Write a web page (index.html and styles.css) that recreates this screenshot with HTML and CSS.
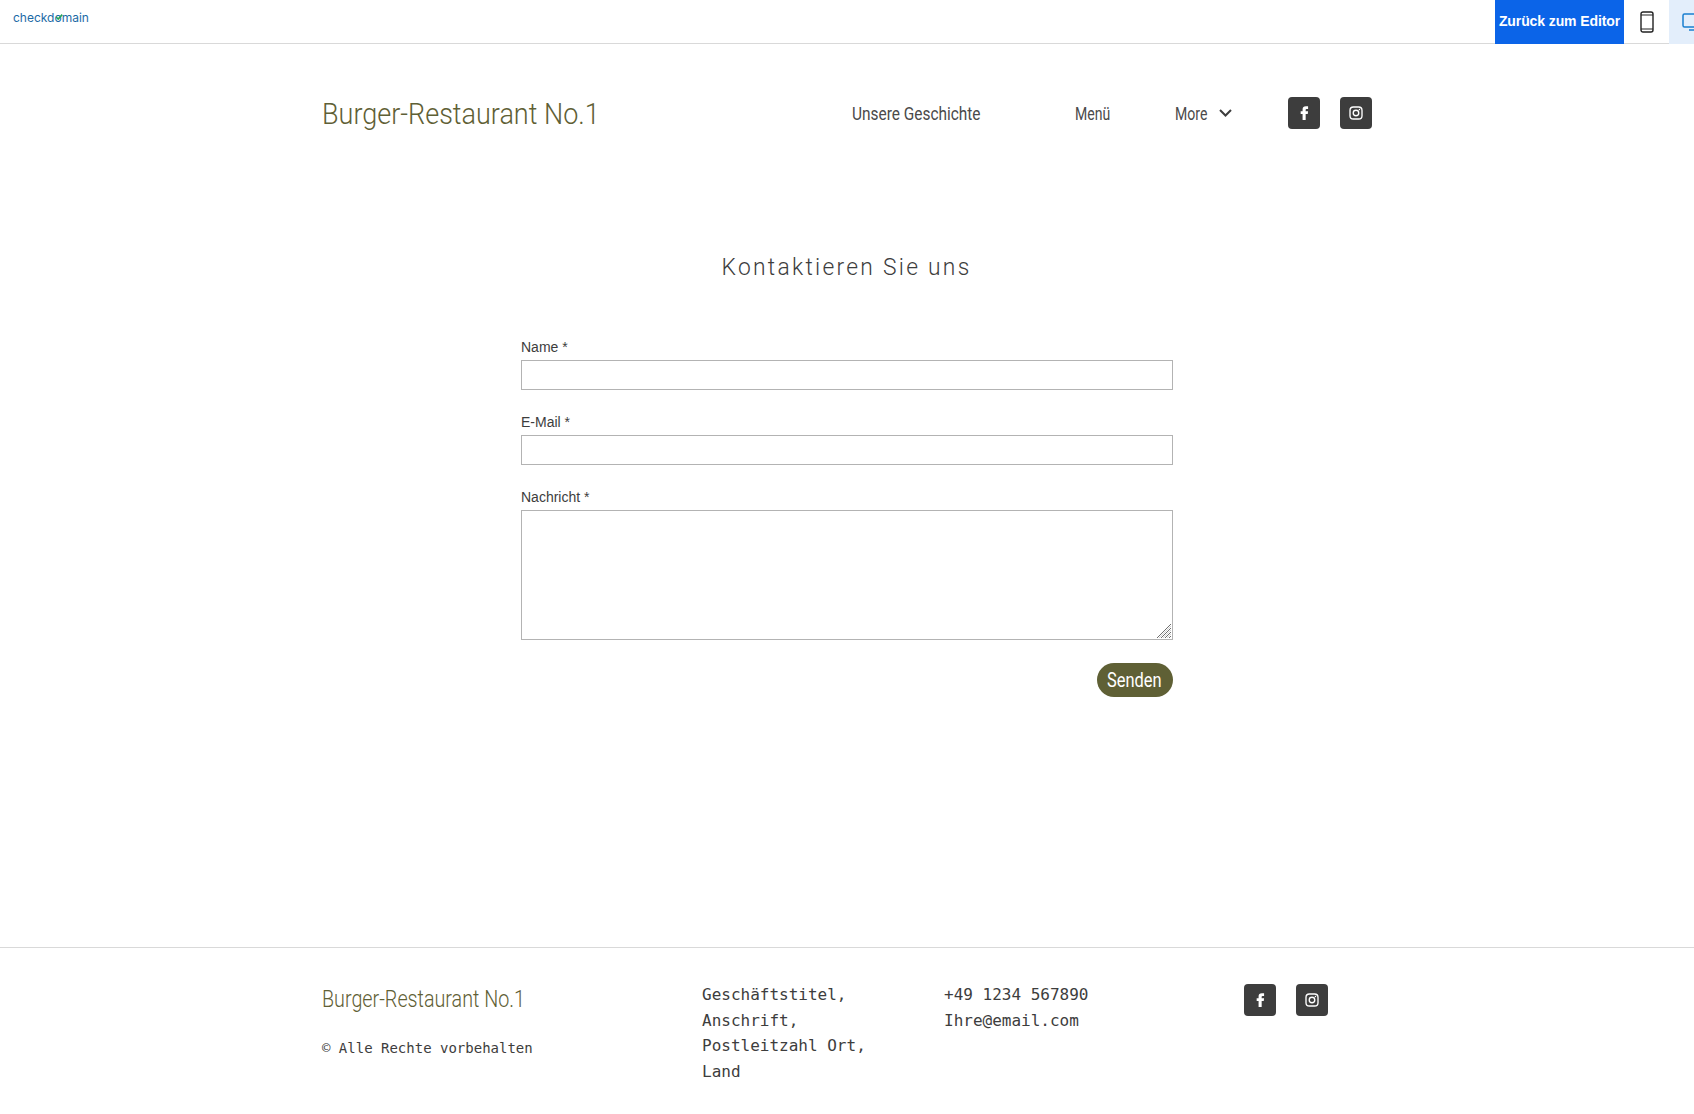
FILE: index.html
```html
<!DOCTYPE html>
<html lang="de">
<head>
    <meta charset="UTF-8">
    <title>Kontakt</title>
    <link rel="stylesheet" href="styles.css">
</head>
<body>
    <div class="topbar">
        <div class="brand">checkd<span class="brand-o">o<svg viewBox="0 0 10 10"><path d="M1.5 5l2.5 2.5L9 2" fill="none" stroke="#25a35a" stroke-width="2"/></svg></span>main</div>
        <a class="back-btn" href="#">Zurück zum Editor</a>
        <div class="device">
            <svg width="14" height="22" viewBox="0 0 14 22"><rect x="1" y="1" width="12" height="20" rx="2" fill="none" stroke="#222" stroke-width="1.4"/><path d="M1 4h12M1 18h12" stroke="#222" stroke-width="1.2"/></svg>
        </div>
        <div class="device device-active">
            <svg width="25" height="18" viewBox="0 0 25 18"><rect x="1" y="1" width="23" height="13" rx="1.5" fill="none" stroke="#1a7fd0" stroke-width="1.5"/><path d="M7 17h11" stroke="#1a7fd0" stroke-width="1.5"/></svg>
        </div>
    </div>

    <header class="site-header">
        <div class="logo"><span>Burger-Restaurant No.1</span></div>
        <nav class="nav">
            <a class="nav-story" href="#"><span>Unsere Geschichte</span></a>
            <a class="nav-menu" href="#"><span>Menü</span></a>
            <a class="nav-more" href="#"><span>More</span>
                <svg width="13" height="8" viewBox="0 0 13 8"><path d="M1 1l5.500 5.500L12 1" fill="none" stroke="#3d3d3d" stroke-width="2"/></svg>
            </a>
            <div class="social">
                <a class="social-btn" href="#"><svg width="20" height="20" viewBox="0 0 24 24"><path d="M14 8c0-.6.3-.9 1-.9h1.900V3.900h-2.600c-2.700 0-4 1.500-4 3.800v2.200H8v3.200h2.300v7.300H14v-7.300h2.500l.4-3.200H14z" fill="#fff"/></svg></a>
                <a class="social-btn" href="#"><svg width="18" height="18" viewBox="0 0 24 24"><rect x="4" y="4" width="16" height="16" rx="4.500" fill="none" stroke="#fff" stroke-width="1.800"/><circle cx="12" cy="12" r="3.700" fill="none" stroke="#fff" stroke-width="1.800"/><circle cx="16.600" cy="7.400" r="1" fill="#fff"/></svg></a>
            </div>
        </nav>
    </header>

    <main class="content">
        <h1 class="title"><span>Kontaktieren Sie uns</span></h1>
        <form class="contact-form">
            <div class="inputBox">
                <label for="name">Name *</label>
                <input id="name" type="text">
            </div>
            <div class="inputBox">
                <label for="email">E-Mail *</label>
                <input id="email" type="text">
            </div>
            <div class="inputBox">
                <label for="msg">Nachricht *</label>
                <textarea id="msg"></textarea>
                <svg class="grip" width="14" height="14" viewBox="0 0 14 14"><path d="M14 0L0 14M14 4L4 14M14 8L8 14M14 12L12 14" stroke="#6e6e6e" stroke-width="1"/><path d="M14 2L2 14M14 6L6 14M14 10L10 14" stroke="#d0d0d0" stroke-width="1"/></svg>
            </div>
            <div class="actions">
                <button class="submit-btn" type="button"><span>Senden</span></button>
            </div>
        </form>
    </main>

    <footer class="site-footer">
        <div class="footer-inner">
            <div class="footer-brand">
                <div class="footer-logo"><span>Burger-Restaurant No.1</span></div>
                <p class="copyright">© Alle Rechte vorbehalten</p>
            </div>
            <div class="footer-address">Geschäftstitel,<br>Anschrift,<br>Postleitzahl Ort,<br>Land</div>
            <div class="footer-contact">+49 1234 567890<br>Ihre@email.com</div>
            <div class="social footer-social">
                <a class="social-btn" href="#"><svg width="20" height="20" viewBox="0 0 24 24"><path d="M14 8c0-.6.3-.9 1-.9h1.900V3.900h-2.600c-2.700 0-4 1.500-4 3.800v2.200H8v3.200h2.300v7.300H14v-7.300h2.500l.4-3.200H14z" fill="#fff"/></svg></a>
                <a class="social-btn" href="#"><svg width="18" height="18" viewBox="0 0 24 24"><rect x="4" y="4" width="16" height="16" rx="4.500" fill="none" stroke="#fff" stroke-width="1.800"/><circle cx="12" cy="12" r="3.700" fill="none" stroke="#fff" stroke-width="1.800"/><circle cx="16.600" cy="7.400" r="1" fill="#fff"/></svg></a>
            </div>
        </div>
    </footer>
</body>
</html>
```

FILE: styles.css
```css
*{
    box-sizing: border-box;
}
html, body{
    overflow: hidden;
}
body{
    margin: 0;
    height: 1114px;
    background: #fff;
    color: #3d3d3d;
    font-family: "Liberation Sans", Arial, sans-serif;
}
a{
    color: inherit;
    text-decoration: none;
}
.logo span, .nav a span, .title span, .submit-btn span, .footer-logo span{
    display: inline-block;
    white-space: nowrap;
    transform-origin: left center;
}
.topbar{
    display: flex;
    height: 44px;
    border-bottom: 1px solid #d9d9d9;
    align-items: stretch;
}
.brand{
    margin-right: auto;
    padding: 10px 0 0 13px;
    font-family: Inter, sans-serif;
    font-size: 12px;
    line-height: 16px;
    color: #1c6aa6;
}
.brand-o{
    position: relative;
}
.brand-o svg{
    position: absolute;
    left: 1px;
    top: 3px;
    width: 8px;
    height: 8px;
}
.back-btn{
    width: 129px;
    margin-bottom: -1px;
    background: #0b64e8;
    color: #fff;
    font-size: 14px;
    font-weight: bold;
    line-height: 43px;
    letter-spacing: -.1px;
    text-align: center;
}
.device{
    display: flex;
    width: 45px;
    align-items: center;
    justify-content: center;
}
.device-active{
    width: 25px;
    margin-bottom: -1px;
    padding-left: 13px;
    justify-content: flex-start;
    background: #e3eefb;
    overflow: hidden;
}
.device-active svg{
    flex: none;
}
.site-header, .footer-inner{
    width: 1050px;
    margin-left: 322px;
}
.site-header{
    display: flex;
    height: 138px;
    align-items: center;
    justify-content: space-between;
}
.logo{
    font-family: Roboto, sans-serif;
    font-size: 30px;
    font-weight: 300;
    color: #5f6035;
}
.logo span{
    transform: scaleX(.9);
}
.nav{
    display: flex;
    align-items: center;
    color: #4a4a4a;
    font-family: Roboto, sans-serif;
    font-size: 18px;
}
.nav a span{
    transform: scaleX(.857);
}
.nav a.nav-menu span, .nav a.nav-more span{
    transform: scaleX(.78);
}
.nav-story{
    width: 223px;
}
.nav-menu{
    width: 100px;
}
.nav-more{
    display: flex;
    width: 113px;
    align-items: center;
}
.nav-more span{
    width: 44px;
}
.social{
    display: flex;
    gap: 20px;
}
.social-btn{
    display: flex;
    width: 32px;
    height: 32px;
    border-radius: 4px;
    background: #3d3d3d;
    align-items: center;
    justify-content: center;
}
.content{
    height: 765px;
    padding-top: 70px;
}
.title{
    margin: 0 0 57px;
    font-family: Roboto, sans-serif;
    font-size: 24px;
    font-weight: 300;
    line-height: 30px;
    letter-spacing: 2.4px;
    text-align: center;
}
.title span{
    transform: scaleX(.95);
    transform-origin: center;
}
.contact-form{
    width: 652px;
    margin: 0 auto;
}
.inputBox{
    position: relative;
    margin-bottom: 24px;
}
.inputBox label{
    display: block;
    margin-bottom: 5px;
    font-size: 14px;
    line-height: 16px;
}
.inputBox input, .inputBox textarea{
    display: block;
    width: 100%;
    height: 30px;
    border: 1px solid #b3b3b3;
    border-radius: 0;
    outline: none;
}
.inputBox textarea{
    height: 130px;
    resize: none;
}
.grip{
    position: absolute;
    right: 2px;
    bottom: 2px;
}
.actions{
    display: flex;
    justify-content: flex-end;
    margin-top: -1px;
}
.submit-btn{
    height: 34px;
    width: 76px;
    padding: 0 0 0 10px;
    border: none;
    border-radius: 17px;
    background: #5f6035;
    color: #fff;
    font-family: Roboto, sans-serif;
    font-size: 20px;
    text-align: left;
}
.submit-btn span{
    transform: scaleX(.82);
}
.site-footer{
    height: 167px;
    border-top: 1px solid #d9d9d9;
    padding-top: 34px;
}
.footer-inner{
    display: flex;
    font-family: "DejaVu Sans Mono", monospace;
    font-size: 16px;
    line-height: 25.6px;
}
.footer-brand{
    width: 380px;
}
.footer-logo{
    margin-top: 1px;
    font-family: Roboto, sans-serif;
    font-size: 24px;
    font-weight: 300;
    line-height: 32px;
    color: #5f6035;
}
.footer-logo span{
    transform: scaleX(.822);
}
.copyright{
    margin: 22px 0 0;
    font-size: 14px;
    line-height: 22px;
}
.footer-address{
    width: 242px;
}
.footer-contact{
    width: 300px;
}
.footer-social{
    margin-top: 2px;
    align-self: flex-start;
}
```
